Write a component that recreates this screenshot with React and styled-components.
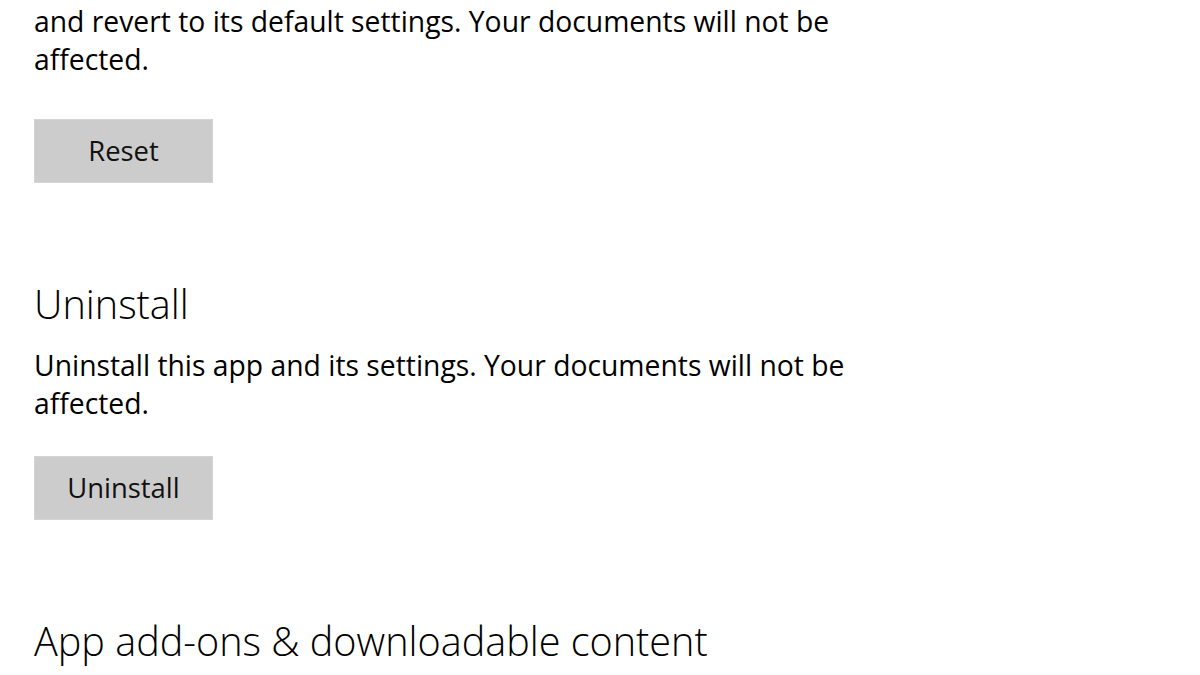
import React from "react";
import styled, { createGlobalStyle } from "styled-components";

const GlobalStyle = createGlobalStyle`
  html, body {
    margin: 0;
    padding: 0;
    background: #ffffff;
  }
  body {
    font-family: "Open Sans", "Noto Sans", sans-serif;
    color: #000000;
    -webkit-font-smoothing: antialiased;
  }
`;

const Page = styled.main`
  display: flex;
  flex-direction: column;
  align-items: flex-start;
  padding: 2px 0 0 34px;
  width: 1200px;
  height: 675px;
  box-sizing: border-box;
  overflow: hidden;
  background: #ffffff;
`;

const Section = styled.section`
  display: flex;
  flex-direction: column;
  align-items: flex-start;
  margin-top: ${(p) => (p.$first ? "0" : "95px")};
`;

const Heading = styled.h2`
  margin: 0;
  font-family: "Open Sans", "Noto Sans", sans-serif;
  font-weight: 300;
  font-size: 39.6px;
  line-height: 52px;
  color: #000000;
  white-space: nowrap;
`;

const Description = styled.p`
  margin: ${(p) => (p.$afterHeading ? "16px" : "0")} 0 0 0;
  width: 860px;
  font-family: "Open Sans", "Noto Sans", sans-serif;
  font-weight: 400;
  font-size: 28.3px;
  line-height: 38px;
  color: #000000;
`;

const ActionButton = styled.button`
  display: flex;
  align-items: center;
  justify-content: center;
  margin-top: ${(p) => p.$gap}px;
  width: 179px;
  height: 64px;
  padding: 0 0 1px 0;
  border: none;
  box-shadow: inset 0 0 0 1px #d4d4d4;
  background: #cccccc;
  font-family: "Open Sans", "Noto Sans", sans-serif;
  font-weight: 400;
  font-size: 27.4px;
  line-height: 1;
  color: #111111;
  cursor: default;
`;

export default function App() {
  return (
    <>
      <GlobalStyle />
      <Page>
        <Section $first>
          <Description>
            and revert to its default settings. Your documents will not be affected.
          </Description>
          <ActionButton $gap={41}>Reset</ActionButton>
        </Section>
        <Section>
          <Heading>Uninstall</Heading>
          <Description $afterHeading>
            Uninstall this app and its settings. Your documents will not be affected.
          </Description>
          <ActionButton $gap={34}>Uninstall</ActionButton>
        </Section>
        <Section>
          <Heading>App add-ons &amp; downloadable content</Heading>
        </Section>
      </Page>
    </>
  );
}
